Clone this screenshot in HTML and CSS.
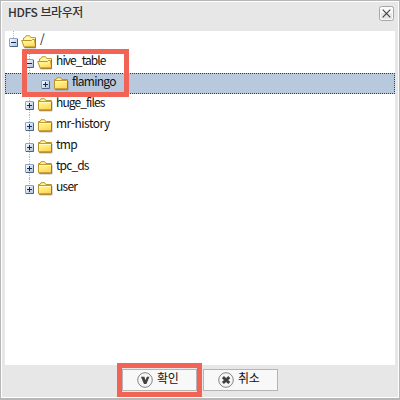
FILE: index.html
```
<!DOCTYPE html>
<html lang="ko">
<head>
<meta charset="utf-8">
<title>HDFS 브라우저</title>
<link rel="stylesheet" href="styles.css">
</head>
<body>
<svg width="0" height="0" class="defs" aria-hidden="true">
  <defs>
    <linearGradient id="gold" x1="0" y1="0" x2=".4" y2="1"><stop offset="0" stop-color="#fffbb0"/><stop offset=".55" stop-color="#fff07e"/><stop offset="1" stop-color="#ffd75e"/></linearGradient>
    <linearGradient id="box" x1="0" y1="0" x2="1" y2="1"><stop offset="0" stop-color="#fff"/><stop offset="1" stop-color="#a9bfdd"/></linearGradient>
    <symbol id="closed" viewBox="0 0 16 15">
      <path d="M2.5 14.1h12.7V5" fill="none" stroke="#666" stroke-opacity=".35"/>
      <path d="M1.5 12.5V3.5H3l1-1.8h3.6l1.2 1.8h5.7v9.5H2z" fill="url(#gold)" stroke="#c0922c"/>
      <path d="M2 4.5h12" stroke="#c9982e"/>
      <path d="M2 5.5h12" stroke="#fffbc8"/>
      <path d="M14.5 5v8.2H2" fill="none" stroke="#a67716"/>
    </symbol>
    <symbol id="open" viewBox="0 0 16 15">
      <path d="M2.5 11V4L4 3.5l1-1.8h3.5l1.2 1.8h4.8V12" fill="#fff7a8" stroke="#c9982e"/>
      <path d="M.7 6.5h9.8l1-1h2l1.2 7.7H3.2z" fill="url(#gold)" stroke="#c0922c"/>
      <path d="M14.5 4.5v8.7H3.5" fill="none" stroke="#a67716"/>
      <path d="M3.5 14.1h11.7" stroke="#666" stroke-opacity=".35"/>
    </symbol>
    <symbol id="minus" viewBox="0 0 9 9"><rect x=".5" y=".5" width="8" height="8" rx=".5" fill="url(#box)" stroke="#8ca4c6"/><path d="M8.5 1v7.5H1" fill="none" stroke="#4c6488"/><path d="M2 4.5h5" stroke="#172b50"/></symbol>
    <symbol id="plus" viewBox="0 0 9 9"><rect x=".5" y=".5" width="8" height="8" rx=".5" fill="url(#box)" stroke="#8ca4c6"/><path d="M8.5 1v7.5H1" fill="none" stroke="#4c6488"/><path d="M2 4.5h5M4.5 2v5" stroke="#172b50"/></symbol>
  </defs>
</svg>
<div class="window">
  <header class="titlebar">
    <h1>HDFS 브라우저</h1>
    <svg class="close" viewBox="0 0 15 15"><rect x=".5" y=".5" width="14" height="14" rx="2" fill="#fafafa" stroke="#a6a6a6"/><rect x="2" y="7" width="11" height="6" fill="#e7e7e7"/><path d="M3.7 3.7l7.6 7.6M11.3 3.7l-7.6 7.6" stroke="#454545" stroke-width="1.2"/></svg>
  </header>
  <main class="tree">
    <div class="row root"><svg class="toggle"><use href="#minus"/></svg><svg class="folder"><use href="#open"/></svg><span>/</span></div>
    <div class="branch">
      <div class="row"><svg class="toggle"><use href="#minus"/></svg><svg class="folder"><use href="#open"/></svg><span class="tight">hive_table</span></div>
      <div class="row selected"><svg class="toggle"><use href="#plus"/></svg><svg class="folder"><use href="#closed"/></svg><span>flamingo</span></div>
      <div class="row"><svg class="toggle"><use href="#plus"/></svg><svg class="folder"><use href="#closed"/></svg><span class="tight">huge_files</span></div>
      <div class="row"><svg class="toggle"><use href="#plus"/></svg><svg class="folder"><use href="#closed"/></svg><span class="loose">mr-history</span></div>
      <div class="row"><svg class="toggle"><use href="#plus"/></svg><svg class="folder"><use href="#closed"/></svg><span>tmp</span></div>
      <div class="row"><svg class="toggle"><use href="#plus"/></svg><svg class="folder"><use href="#closed"/></svg><span class="tight">tpc_ds</span></div>
      <div class="row"><svg class="toggle"><use href="#plus"/></svg><svg class="folder"><use href="#closed"/></svg><span>user</span></div>
    </div>
    <div class="highlight mark-tree"></div>
  </main>
  <footer class="actions">
    <button class="button"><svg viewBox="0 0 16 16"><circle cx="8" cy="8" r="7.3" fill="#f6f6f6" stroke="#858585"/><path d="M3.9 4.8h3.5L8.5 8.2l1.4-3.4h2.5L9.4 12H7z" fill="#414141"/></svg><span>확인</span></button>
    <button class="button"><svg viewBox="0 0 16 16"><circle cx="8" cy="8" r="7.3" fill="#f6f6f6" stroke="#858585"/><path d="M4.9 5.2l6.4 5.8M11.3 5.2L4.9 11" stroke="#414141" stroke-width="3"/></svg><span>취소</span></button>
    <div class="highlight mark-ok"></div>
  </footer>
</div>
</body>
</html>
```
FILE: styles.css
```
* { box-sizing: border-box; }
body { margin: 0; background: #fff; font: 12px/20px "Noto Sans CJK KR", sans-serif; color: #111; }
.defs { position: absolute; }
.window { width: 400px; height: 400px; display: flex; flex-direction: column; background: #e7e7e7; border: 1px solid #b7b7b7; border-bottom-width: 2px; box-shadow: inset 0 0 0 1px #fff; padding: 0 4px; }
.titlebar { height: 30px; display: flex; justify-content: space-between; padding: 5px 1px 0 3px; }
h1 { margin: -4px 0 0; font-size: 12px; line-height: 20px; font-weight: 500; letter-spacing: -.4px; color: #333; }
.close { width: 15px; height: 15px; }
.tree { position: relative; height: 334px; background: #fff; }
.row { position: relative; height: 21px; display: flex; align-items: flex-start; padding-left: 20px; }
.root { padding-left: 4px; }
.row span { line-height: 20px; margin: -2px 0 0 3px; white-space: pre; letter-spacing: -.75px; }
.row .tight { letter-spacing: -.9px; }
.row .loose { letter-spacing: -.5px; }
.toggle { width: 9px; height: 9px; margin: 7px 3px 0 0; z-index: 1; }
.folder { width: 16px; height: 15px; margin-top: 3px; }
.row::before { content: ""; position: absolute; left: 24px; top: 0; height: 21px; border-left: 1px dotted #b5b5b5; }
.root::before { left: 8px; height: 7px; }
.row:last-child::before { height: 8px; }
.selected { padding-left: 36px; background: #b8c9dd; outline: 1px dotted #333d4b; outline-offset: -1px; }
.row.selected::before { display: none; }
.highlight { position: absolute; border: 5px solid #f16355; z-index: 2; }
.mark-tree { left: 17px; top: 18px; width: 107px; height: 48px; }
.actions { position: relative; display: flex; gap: 6px; padding: 4px 0 0 117px; }
.button { display: flex; align-items: center; width: 75px; height: 22px; padding: 0 0 0 14px; border: 1px solid #b5b5b5; background: #f8f8f8; color: #111; font: 12px/20px "Noto Sans CJK KR", sans-serif; letter-spacing: -.3px; }
.button svg { width: 16px; height: 16px; margin-right: 4px; }
.button span { margin-top: -4px; }
.mark-ok { left: 112px; top: -2px; width: 85px; height: 34px; }
```
